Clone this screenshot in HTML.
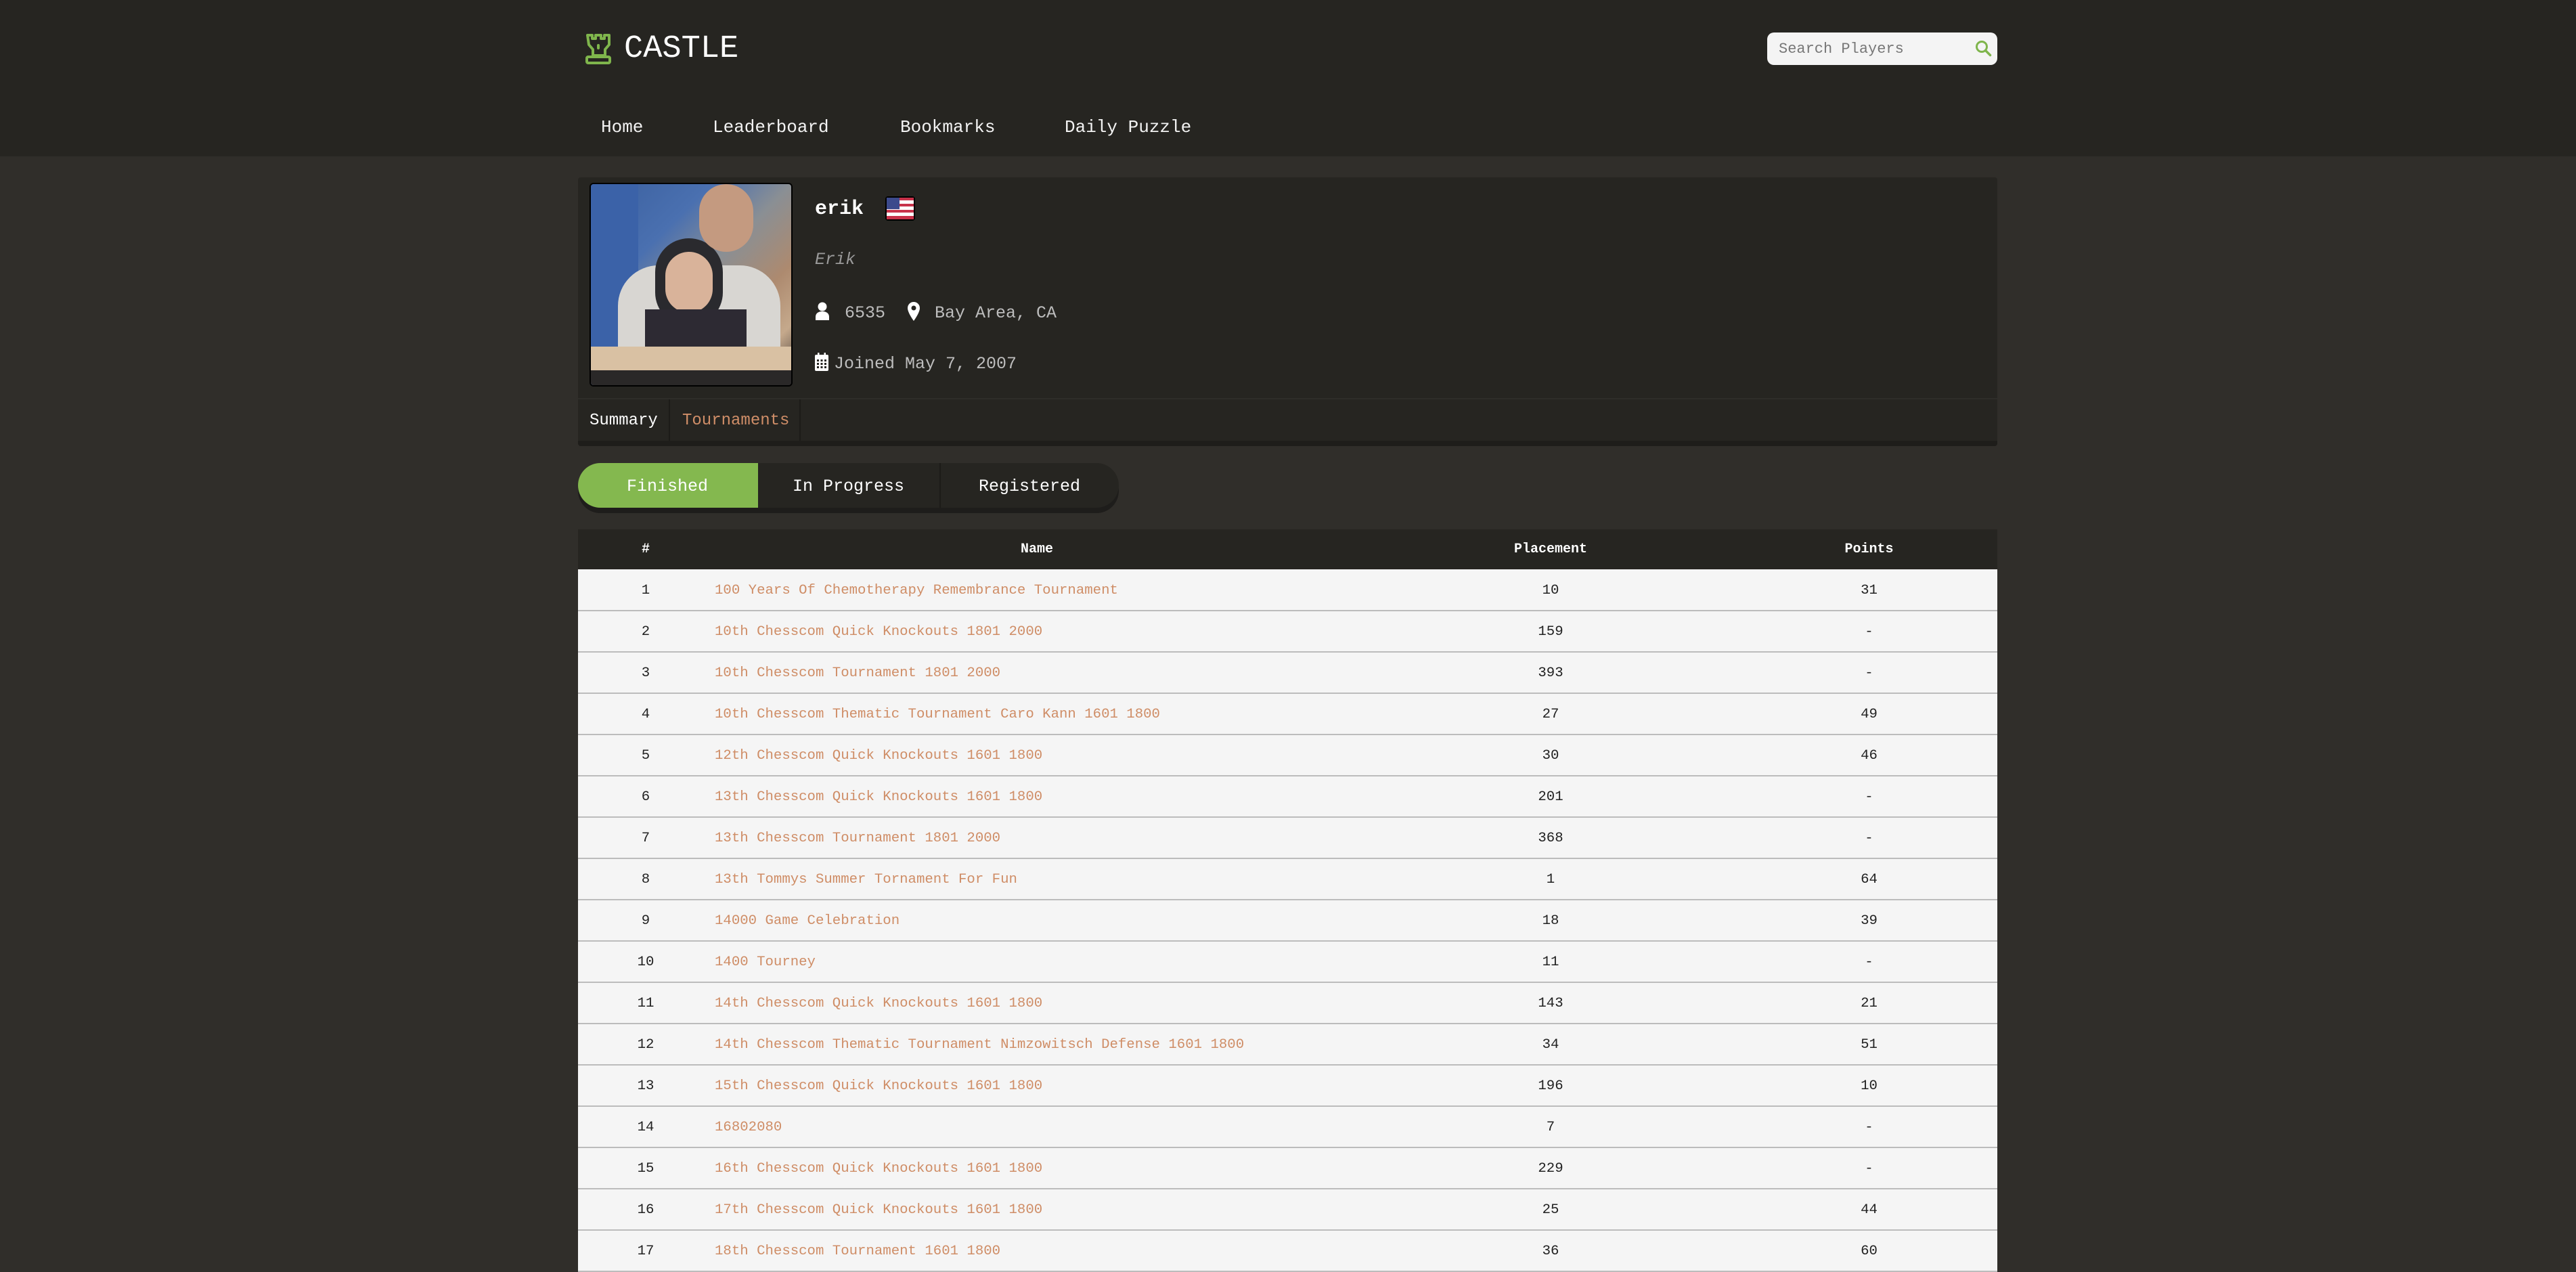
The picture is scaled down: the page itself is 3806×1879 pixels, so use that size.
<!DOCTYPE html>
<html><head><meta charset="utf-8"><style>
*{margin:0;padding:0;box-sizing:border-box}
body{width:3806px;height:1874px;overflow:hidden;background:#302e2a;font-family:"Liberation Mono",monospace;position:relative}
.a{position:absolute;white-space:nowrap}
#hdr{position:absolute;left:0;top:0;width:3806px;height:231px;background:#262521}
.nav{top:173px;font-size:26px;color:#f2f2f2}
table{position:absolute;left:854px;top:782px;width:2097px;border-collapse:collapse;font-size:20.7px}
th{background:#262521;color:#fff;height:59px;font-weight:bold;font-size:20px;text-align:center}
td{background:#f5f5f5;height:61px;border-bottom:2px solid #bcbcbc;text-align:center;color:#222;padding-top:2px}
td.n{text-align:left;color:#cf8d66;padding-left:2px}
</style></head><body>
<div id="hdr"></div>
<svg class="a" style="left:864px;top:48px" width="40" height="48" viewBox="0 0 40 48"><g fill="none" stroke="#7fb54c" stroke-width="4" stroke-linejoin="round"><path d="M4 4h7v5h5V4h8v5h5V4h7v14l-6 7v9h-18v-9l-6-7z"/><rect x="3" y="36" width="34" height="9" rx="2"/></g><rect x="18" y="17" width="4" height="8" rx="2" fill="#7fb54c"/></svg>
<div class="a" style="left:922px;top:46px;font-size:47px;color:#fff">CASTLE</div>
<div class="a" style="left:2611px;top:48px;width:340px;height:48px;background:#f4f4f4;border-radius:10px"></div>
<div class="a" style="left:2628px;top:60px;font-size:22px;color:#777">Search Players</div>
<svg class="a" style="left:2918px;top:59px" width="26" height="26" viewBox="0 0 26 26"><circle cx="10" cy="10" r="7.5" fill="none" stroke="#7fb54c" stroke-width="3"/><path d="M15.5 15.5l7 7" stroke="#7fb54c" stroke-width="3.5" stroke-linecap="round"/></svg>
<div class="a nav" style="left:888px">Home</div>
<div class="a nav" style="left:1053px">Leaderboard</div>
<div class="a nav" style="left:1330px">Bookmarks</div>
<div class="a nav" style="left:1573px">Daily Puzzle</div>

<div class="a" style="left:854px;top:262px;width:2097px;height:397px;background:#262521;border-bottom:8px solid #1e1d1a;border-radius:4px"></div>
<div class="a" style="left:871px;top:270px;width:300px;height:301px;border:2px solid #000;border-radius:6px;overflow:hidden;background:linear-gradient(135deg,#3a5f9e 0%,#4a70b0 30%,#8a8f94 50%,#ad8a6f 70%,#c5a98c 85%,#3b3330 100%)">
<div style="position:absolute;left:0;top:0;width:70px;height:300px;background:#3b62a8"></div>
<div style="position:absolute;left:40px;top:120px;width:240px;height:130px;border-radius:60px 60px 0 0;background:#d8d6d2"></div>
<div style="position:absolute;left:95px;top:80px;width:100px;height:130px;border-radius:50px;background:#2a2a2e"></div>
<div style="position:absolute;left:110px;top:100px;width:70px;height:90px;border-radius:35px;background:#d9b39a"></div>
<div style="position:absolute;left:160px;top:0;width:80px;height:100px;border-radius:40px;background:#c49a80"></div>
<div style="position:absolute;left:80px;top:185px;width:150px;height:80px;background:#2d2a33"></div>
<div style="position:absolute;left:0;top:240px;width:300px;height:40px;background:#d9c1a3"></div>
<div style="position:absolute;left:0;top:275px;width:300px;height:30px;background:#2a2828"></div>
</div>
<div class="a" style="left:1204px;top:292px;font-size:30px;color:#fff;font-weight:bold">erik</div>
<svg class="a" style="left:1307px;top:289px" width="46" height="38" viewBox="0 0 46 38"><rect x="1" y="1" width="44" height="36" rx="4" fill="#000"/><g><rect x="3" y="3" width="40" height="32" fill="#fff"/><rect x="3" y="3" width="40" height="4" fill="#c8324a"/><rect x="3" y="12" width="40" height="4" fill="#c8324a"/><rect x="3" y="21" width="40" height="4" fill="#c8324a"/><rect x="3" y="30" width="40" height="5" fill="#c8324a"/><rect x="3" y="3" width="19" height="17" fill="#3c4a8c"/></g></svg>
<div class="a" style="left:1204px;top:369px;font-size:25px;color:#9a9a9a;font-style:italic">Erik</div>
<svg class="a" style="left:1204px;top:446px" width="22" height="28" viewBox="0 0 22 28"><circle cx="11" cy="7" r="6.5" fill="#fff"/><path d="M1 27v-5c0-5 4-8 10-8s10 3 10 8v5z" fill="#fff"/></svg>
<div class="a" style="left:1248px;top:448px;font-size:25px;color:#bdbdbd">6535</div>
<svg class="a" style="left:1340px;top:445px" width="20" height="30" viewBox="0 0 20 30"><path d="M10 1a9 9 0 0 0-9 9c0 7 9 19 9 19s9-12 9-19a9 9 0 0 0-9-9z" fill="#fff"/><circle cx="10" cy="10" r="3.5" fill="#262521"/></svg>
<div class="a" style="left:1381px;top:448px;font-size:25px;color:#bdbdbd">Bay Area, CA</div>
<svg class="a" style="left:1204px;top:521px" width="20" height="27" viewBox="0 0 20 27"><rect x="0" y="3" width="20" height="24" rx="2" fill="#fff"/><g fill="#262521"><rect x="3" y="10" width="3" height="3"/><rect x="8.5" y="10" width="3" height="3"/><rect x="14" y="10" width="3" height="3"/><rect x="3" y="15" width="3" height="3"/><rect x="8.5" y="15" width="3" height="3"/><rect x="14" y="15" width="3" height="3"/><rect x="3" y="20" width="3" height="3"/><rect x="8.5" y="20" width="3" height="3"/><rect x="14" y="20" width="3" height="3"/></g><rect x="4" y="0" width="2.5" height="5" fill="#fff"/><rect x="13.5" y="0" width="2.5" height="5" fill="#fff"/></svg>
<div class="a" style="left:1232px;top:523px;font-size:25px;color:#bdbdbd">Joined May 7, 2007</div>
<div class="a" style="left:854px;top:588px;width:2097px;height:2px;background:#2e2d29"></div>
<div class="a" style="left:988px;top:590px;width:2px;height:61px;background:#1c1b18"></div>
<div class="a" style="left:1181px;top:590px;width:2px;height:61px;background:#1c1b18"></div>
<div class="a" style="left:871px;top:608px;font-size:24px;color:#fff">Summary</div>
<div class="a" style="left:1008px;top:608px;font-size:24px;color:#d08e68">Tournaments</div>

<div class="a" style="left:854px;top:692px;width:799px;height:66px;background:#1e1d1b;border-radius:33px"></div>
<div class="a" style="left:854px;top:684px;width:799px;height:66px;background:#262521;border-radius:33px;overflow:hidden">
<div style="position:absolute;left:0;top:0;width:266px;height:66px;background:#84b84f"></div>
<div style="position:absolute;left:534px;top:0;width:2px;height:66px;background:#1c1b18"></div>
</div>
<div class="a" style="left:926px;top:704px;font-size:25px;color:#fff">Finished</div>
<div class="a" style="left:1171px;top:704px;font-size:25px;color:#fff">In Progress</div>
<div class="a" style="left:1446px;top:704px;font-size:25px;color:#fff">Registered</div>

<table>
<colgroup><col style="width:200px"><col style="width:956px"><col style="width:562px"><col style="width:379px"></colgroup>
<tr><th>#</th><th>Name</th><th>Placement</th><th>Points</th></tr>
<tr><td>1</td><td class="n">100 Years Of Chemotherapy Remembrance Tournament</td><td>10</td><td>31</td></tr>
<tr><td>2</td><td class="n">10th Chesscom Quick Knockouts 1801 2000</td><td>159</td><td>-</td></tr>
<tr><td>3</td><td class="n">10th Chesscom Tournament 1801 2000</td><td>393</td><td>-</td></tr>
<tr><td>4</td><td class="n">10th Chesscom Thematic Tournament Caro Kann 1601 1800</td><td>27</td><td>49</td></tr>
<tr><td>5</td><td class="n">12th Chesscom Quick Knockouts 1601 1800</td><td>30</td><td>46</td></tr>
<tr><td>6</td><td class="n">13th Chesscom Quick Knockouts 1601 1800</td><td>201</td><td>-</td></tr>
<tr><td>7</td><td class="n">13th Chesscom Tournament 1801 2000</td><td>368</td><td>-</td></tr>
<tr><td>8</td><td class="n">13th Tommys Summer Tornament For Fun</td><td>1</td><td>64</td></tr>
<tr><td>9</td><td class="n">14000 Game Celebration</td><td>18</td><td>39</td></tr>
<tr><td>10</td><td class="n">1400 Tourney</td><td>11</td><td>-</td></tr>
<tr><td>11</td><td class="n">14th Chesscom Quick Knockouts 1601 1800</td><td>143</td><td>21</td></tr>
<tr><td>12</td><td class="n">14th Chesscom Thematic Tournament Nimzowitsch Defense 1601 1800</td><td>34</td><td>51</td></tr>
<tr><td>13</td><td class="n">15th Chesscom Quick Knockouts 1601 1800</td><td>196</td><td>10</td></tr>
<tr><td>14</td><td class="n">16802080</td><td>7</td><td>-</td></tr>
<tr><td>15</td><td class="n">16th Chesscom Quick Knockouts 1601 1800</td><td>229</td><td>-</td></tr>
<tr><td>16</td><td class="n">17th Chesscom Quick Knockouts 1601 1800</td><td>25</td><td>44</td></tr>
<tr><td>17</td><td class="n">18th Chesscom Tournament 1601 1800</td><td>36</td><td>60</td></tr>
</table>
</body></html>
